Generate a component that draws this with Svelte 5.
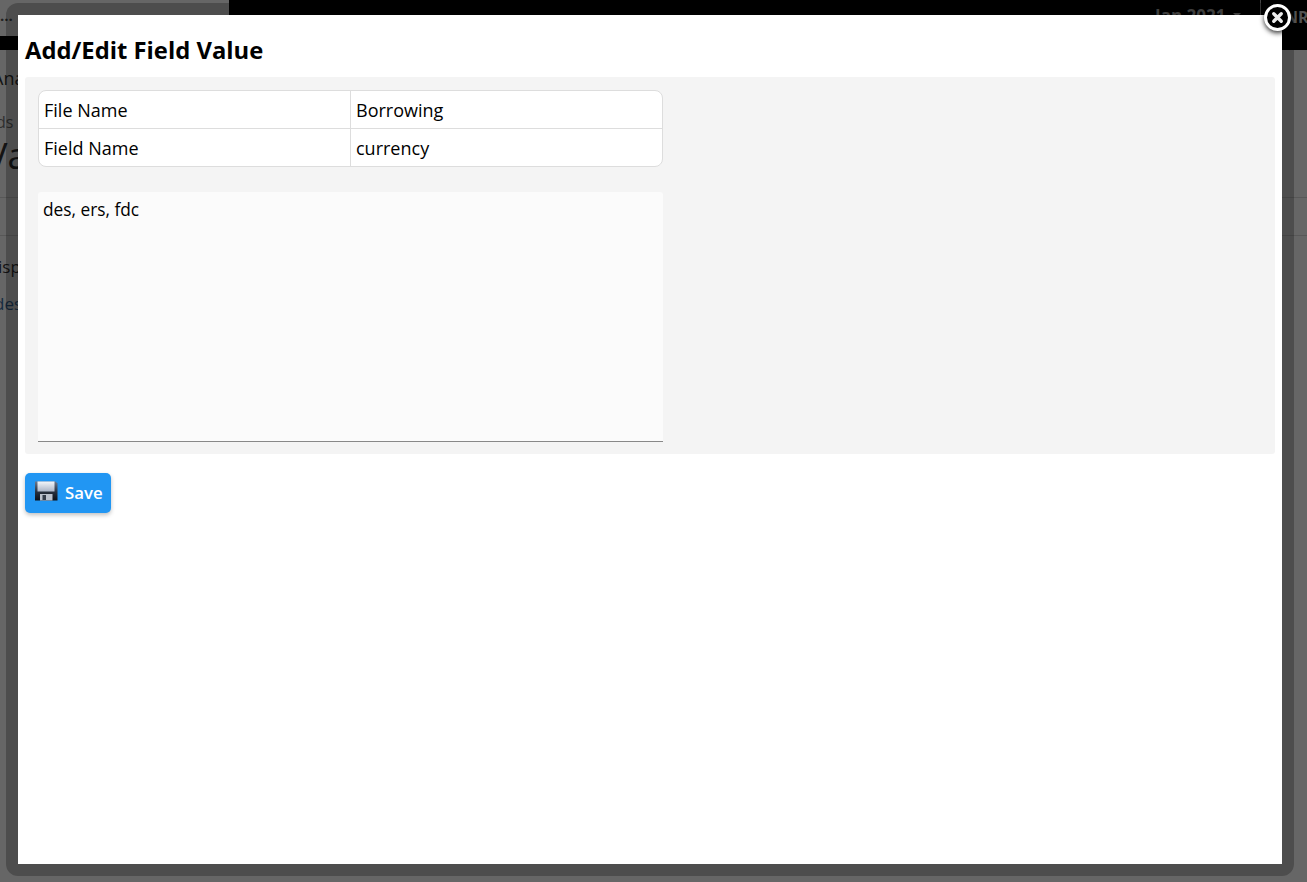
<script lang="ts">
	const rows = [
		{ label: 'File Name', value: 'Borrowing' },
		{ label: 'Field Name', value: 'currency' }
	];

	let fieldValue = $state('des, ers, fdc');
</script>

<div class="page">
	<header class="topbar">
		<div class="topbar__brand">...</div>
		<div class="topbar__period">Jan 2021 <span class="caret"></span></div>
		<div class="topbar__user">NR</div>
	</header>
	<div class="crumb">Ana</div>
	<div class="sub">ds</div>
	<div class="heading">Va</div>
	<div class="rule rule--a"></div>
	<div class="rule rule--b"></div>
	<div class="line">isp</div>
	<div class="line line--link">des</div>
</div>

<div class="overlay">
	<div class="frame">
		<div class="modal">
			<h2 class="modal__title">Add/Edit Field Value</h2>

			<div class="panel">
				<table class="info">
					<tbody>
						{#each rows as row}
							<tr>
								<td>{row.label}</td>
								<td>{row.value}</td>
							</tr>
						{/each}
					</tbody>
				</table>

				<textarea class="value" bind:value={fieldValue} spellcheck="false"></textarea>
			</div>

			<button class="save" type="button">
				<svg class="save__icon" viewBox="0 0 24 20" width="24" height="20" aria-hidden="true">
					<defs>
						<linearGradient id="disk" x1="0" y1="0" x2="0" y2="1">
							<stop offset="0" stop-color="#6c7a90" />
							<stop offset="0.55" stop-color="#27303e" />
							<stop offset="1" stop-color="#0b1019" />
						</linearGradient>
						<linearGradient id="label" x1="0" y1="0" x2="0" y2="1">
							<stop offset="0" stop-color="#f4f6fa" />
							<stop offset="1" stop-color="#aab4c6" />
						</linearGradient>
					</defs>
					<path d="M1 0.5h20.5l2 2v17H1z" fill="url(#disk)" />
					<rect x="3.5" y="0.5" width="17" height="10" fill="url(#label)" />
					<rect x="6" y="13" width="12.5" height="6.5" fill="#b9c0cc" />
					<rect x="8.5" y="14" width="3.5" height="5" fill="#333c4a" />
				</svg>
				<span>Save</span>
			</button>
		</div>

		<button class="close" type="button" aria-label="Close">
			<svg viewBox="0 0 16 16" width="15" height="15" aria-hidden="true">
				<path d="M4 4l8 8M12 4l-8 8" stroke="#eee" stroke-width="3.6" stroke-linecap="round" />
			</svg>
		</button>
	</div>
</div>

<style>
	:global(body) {
		margin: 0;
		background: #fff;
		font-family: "Open Sans", "Noto Sans", sans-serif;
		color: #000;
	}

	.page {
		height: 882px;
		overflow: hidden;
		font-size: 18px;
		color: #333;
	}

	.topbar {
		height: 50px;
		background: #000;
		display: flex;
		align-items: flex-start;
		color: #ccc;
		font-weight: 700;
		font-size: 17px;
	}

	.topbar__brand {
		width: 229px;
		height: 36px;
		background: #fff;
		color: #555;
		line-height: 30px;
		font-size: 15px;
	}

	.topbar__period {
		margin-left: auto;
		padding-top: 6px;
		width: 105px;
		line-height: 20px;
	}

	.caret {
		display: inline-block;
		margin-left: 3px;
		border: 4px solid transparent;
		border-top-color: #ccc;
		vertical-align: middle;
	}

	.topbar__user {
		width: 47px;
		height: 50px;
		padding-left: 24px;
		box-sizing: border-box;
		border-left: 1px solid #aaa;
		line-height: 34px;
		font-size: 16px;
	}

	.crumb {
		margin: 16px 0 0 -8px;
		line-height: 24px;
		font-size: 18px;
	}

	.sub {
		margin: 20px 0 0 -4px;
		line-height: 24px;
		font-size: 16px;
		color: #777;
	}

	.heading {
		margin: 0 0 0 -14px;
		line-height: 44px;
		font-size: 36px;
		color: #333;
	}

	.rule {
		height: 1px;
		background: #ddd;
	}

	.rule--a {
		margin-top: 19px;
	}

	.rule--b {
		margin-top: 37px;
	}

	.line {
		margin: 19px 0 0 -2px;
		line-height: 24px;
		font-size: 17px;
	}

	.line--link {
		margin: 13px 0 0 -6px;
		color: #3b6ea5;
	}

	.overlay {
		position: fixed;
		inset: 0;
		background: rgba(0, 0, 0, 0.6);
	}

	.frame {
		position: absolute;
		left: 6px;
		top: 3px;
		width: 1288px;
		height: 873px;
		box-sizing: border-box;
		padding: 12px;
		background: rgba(0, 0, 0, 0.25);
		border-radius: 12px;
	}

	.modal {
		height: 100%;
		box-sizing: border-box;
		padding: 0 7px;
		background: #fff;
		display: flex;
		flex-direction: column;
		align-items: flex-start;
	}

	.modal__title {
		margin: 0;
		height: 62px;
		line-height: 71px;
		font-size: 23.8px;
		font-weight: 700;
		color: #000;
	}

	.panel {
		align-self: stretch;
		box-sizing: border-box;
		height: 377px;
		padding: 13px;
		background: #f4f4f4;
		border-radius: 3px;
	}

	.info {
		width: 625px;
		height: 77px;
		table-layout: fixed;
		border-collapse: separate;
		border-spacing: 0;
		background: #fff;
		border: 1px solid #ddd;
		border-radius: 8px;
		font-size: 18px;
	}

	.info td {
		padding: 2px 5px 0;
		line-height: 24px;
		color: #000;
	}

	.info td:first-child {
		width: 301px;
	}

	.info td + td {
		border-left: 1px solid #ddd;
	}

	.info tr + tr td {
		border-top: 1px solid #ddd;
	}

	.value {
		display: block;
		width: 625px;
		height: 250px;
		margin-top: 25px;
		box-sizing: border-box;
		padding: 6px 5px 5px;
		resize: none;
		border: none;
		border-bottom: 1px solid #888;
		border-radius: 3px 3px 0 0;
		outline: none;
		background: #fbfbfb;
		font: 17.3px/24px "Open Sans", "Noto Sans", sans-serif;
		color: #000;
	}

	.save {
		margin-top: 19px;
		width: 86px;
		height: 40px;
		padding: 0 0 0 9px;
		display: flex;
		align-items: center;
		gap: 7px;
		border: none;
		border-radius: 5px;
		background: #2196f3;
		box-shadow: 0 2px 4px rgba(0, 0, 0, 0.25);
		color: #fff;
		font: 600 16.8px/42px "Open Sans", "Noto Sans", sans-serif;
	}

	.save__icon {
		margin-top: -4px;
		flex: none;
	}

	.close {
		position: absolute;
		right: 3px;
		top: 1px;
		width: 27px;
		height: 27px;
		box-sizing: border-box;
		padding: 0;
		display: flex;
		align-items: center;
		justify-content: center;
		border: 3px solid #fff;
		border-radius: 50%;
		background: #000;
		box-shadow: 0 2px 5px rgba(0, 0, 0, 0.8);
	}
</style>
